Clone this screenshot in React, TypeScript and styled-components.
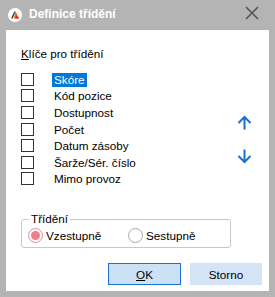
import React from "react";
import styled, { createGlobalStyle } from "styled-components";

const Global = createGlobalStyle`
  html, body { margin: 0; padding: 0; }
  body { background: #b4b4b4; font-family: "Liberation Sans", Arial, sans-serif; font-size: 11.7px; color: #000; }
`;

const Window = styled.div`
  width: 275px;
  height: 297px;
  background: #b4b4b4;
  display: flex;
  flex-direction: column;
  box-sizing: border-box;
`;

const TitleBar = styled.div`
  height: 30px;
  display: flex;
  align-items: center;
  padding: 1px 0 0 8px;
  box-sizing: border-box;
`;

const TitleText = styled.span`
  margin-left: 7px;
  color: #fff;
  font-weight: bold;
  font-size: 12px;
  flex: 1;
  margin-top: -2px;
`;

const CloseBtn = styled.div`
  width: 28px;
  display: flex;
  justify-content: center;
  margin: -4px 9px 0 0;
`;

const Panel = styled.div`
  flex: 1;
  margin: 0 6px 6px 6px;
  background: #fff;
  display: flex;
  flex-direction: column;
  padding: 17px 7px 6px 15px;
  box-sizing: border-box;
`;

const Label = styled.div`
  line-height: 14px;
  height: 14px;
`;

const U = styled.span`
  text-decoration: underline;
`;

const ListArea = styled.div`
  display: flex;
  margin-top: 12px;
`;

const List = styled.div`
  flex: 1;
  display: flex;
  flex-direction: column;
`;

const Row = styled.div`
  height: 16.6px;
  display: flex;
  align-items: flex-start;
`;

const Check = styled.div`
  width: 13px;
  height: 13px;
  box-sizing: border-box;
  border: 1px solid #333;
  background: #fff;
`;

const ItemText = styled.span<{ $selected?: boolean }>`
  margin-left: 18px;
  padding: 0 2px;
  line-height: 14px;
  height: 14px;
  background: ${(p) => (p.$selected ? "#0078d7" : "transparent")};
  color: ${(p) => (p.$selected ? "#fff" : "#000")};
`;

const Arrows = styled.div`
  width: 28px;
  display: flex;
  flex-direction: column;
  align-items: center;
  padding-top: 42px;
  gap: 19px;
  margin-right: 4px;
`;

const Group = styled.fieldset`
  margin: 23px 0 0 0;
  width: 210px;
  box-sizing: border-box;
  border: 1px solid #c8c8c8;
  border-radius: 3px;
  padding: 1px 6px 4px 6px;
  display: flex;
  min-inline-size: auto;
`;

const Legend = styled.legend`
  padding: 0 2px;
  margin-left: 1px;
  line-height: 14px;
`;

const RadioRow = styled.div`
  display: flex;
  align-items: center;
  height: 16px;
`;

const RadioItem = styled.label<{ $w?: number }>`
  display: flex;
  align-items: center;
  width: ${(p) => (p.$w ? `${p.$w}px` : "auto")};
`;

const RadioCircle = styled.span<{ $checked?: boolean }>`
  width: 15px;
  height: 15px;
  box-sizing: border-box;
  border-radius: 50%;
  border: 1px solid ${(p) => (p.$checked ? "#e88894" : "#a8a8a8")};
  display: flex;
  align-items: center;
  justify-content: center;
  background: #fff;
  &::after {
    content: "";
    width: 9px;
    height: 9px;
    border-radius: 50%;
    background: ${(p) => (p.$checked ? "#ef7f8d" : "transparent")};
  }
`;

const RadioText = styled.span`
  margin-left: 3px;
`;

const Buttons = styled.div`
  margin-top: 15px;
  display: flex;
  justify-content: flex-end;
  gap: 9px;
`;

const Button = styled.div<{ $primary?: boolean }>`
  width: ${(p) => (p.$primary ? 73 : 72)}px;
  height: 22px;
  box-sizing: border-box;
  display: flex;
  align-items: center;
  justify-content: center;
  background: ${(p) => (p.$primary ? "#cce0f6" : "#d4e4f6")};
  border: 1px solid ${(p) => (p.$primary ? "#1a72d6" : "#d4e4f6")};
`;

const items = [
  "Skóre",
  "Kód pozice",
  "Dostupnost",
  "Počet",
  "Datum zásoby",
  "Šarže/Sér. číslo",
  "Mimo provoz",
];

const AppIcon = () => (
  <svg width="14" height="14" viewBox="0 0 14 14">
    <circle cx="7" cy="7" r="7" fill="#fff" />
    <path d="M3 10.5 L6.3 3.5 L7.6 3.5 L4.6 10.5 Z" fill="#3a3a3a" />
    <path d="M7.6 3.5 L11.2 10.5 L5.6 10.5 Z" fill="#f06a1e" />
    <path d="M8.6 7.2 L11.2 10.5 L7.4 10.5 Z" fill="#e52b2b" />
  </svg>
);

const CloseIcon = () => (
  <svg width="14" height="14" viewBox="0 0 14 14">
    <path d="M1 1 L13 13 M13 1 L1 13" stroke="#555" strokeWidth="1.6" fill="none" />
  </svg>
);

const UpArrow = () => (
  <svg width="15" height="15" viewBox="0 0 15 15">
    <path d="M7.5 14.5 V2 M1.5 8 L7.5 2 L13.5 8" stroke="#1b6fd3" strokeWidth="2" fill="none" />
  </svg>
);

const DownArrow = () => (
  <svg width="15" height="15" viewBox="0 0 15 15">
    <path d="M7.5 0.5 V13 M1.5 7 L7.5 13 L13.5 7" stroke="#1b6fd3" strokeWidth="2" fill="none" />
  </svg>
);

export default function App() {
  return (
    <>
      <Global />
      <Window>
        <TitleBar>
          <AppIcon />
          <TitleText>Definice třídění</TitleText>
          <CloseBtn>
            <CloseIcon />
          </CloseBtn>
        </TitleBar>
        <Panel>
          <Label>
            <U>K</U>líče pro třídění
          </Label>
          <ListArea>
            <List>
              {items.map((t, i) => (
                <Row key={t}>
                  <Check />
                  <ItemText $selected={i === 0}>{t}</ItemText>
                </Row>
              ))}
            </List>
            <Arrows>
              <UpArrow />
              <DownArrow />
            </Arrows>
          </ListArea>
          <Group>
            <Legend>Třídění</Legend>
            <RadioRow>
              <RadioItem $w={100}>
                <RadioCircle $checked />
                <RadioText>Vzestupně</RadioText>
              </RadioItem>
              <RadioItem>
                <RadioCircle />
                <RadioText>Sestupně</RadioText>
              </RadioItem>
            </RadioRow>
          </Group>
          <Buttons>
            <Button $primary>
              <U>O</U>K
            </Button>
            <Button>Storno</Button>
          </Buttons>
        </Panel>
      </Window>
    </>
  );
}
